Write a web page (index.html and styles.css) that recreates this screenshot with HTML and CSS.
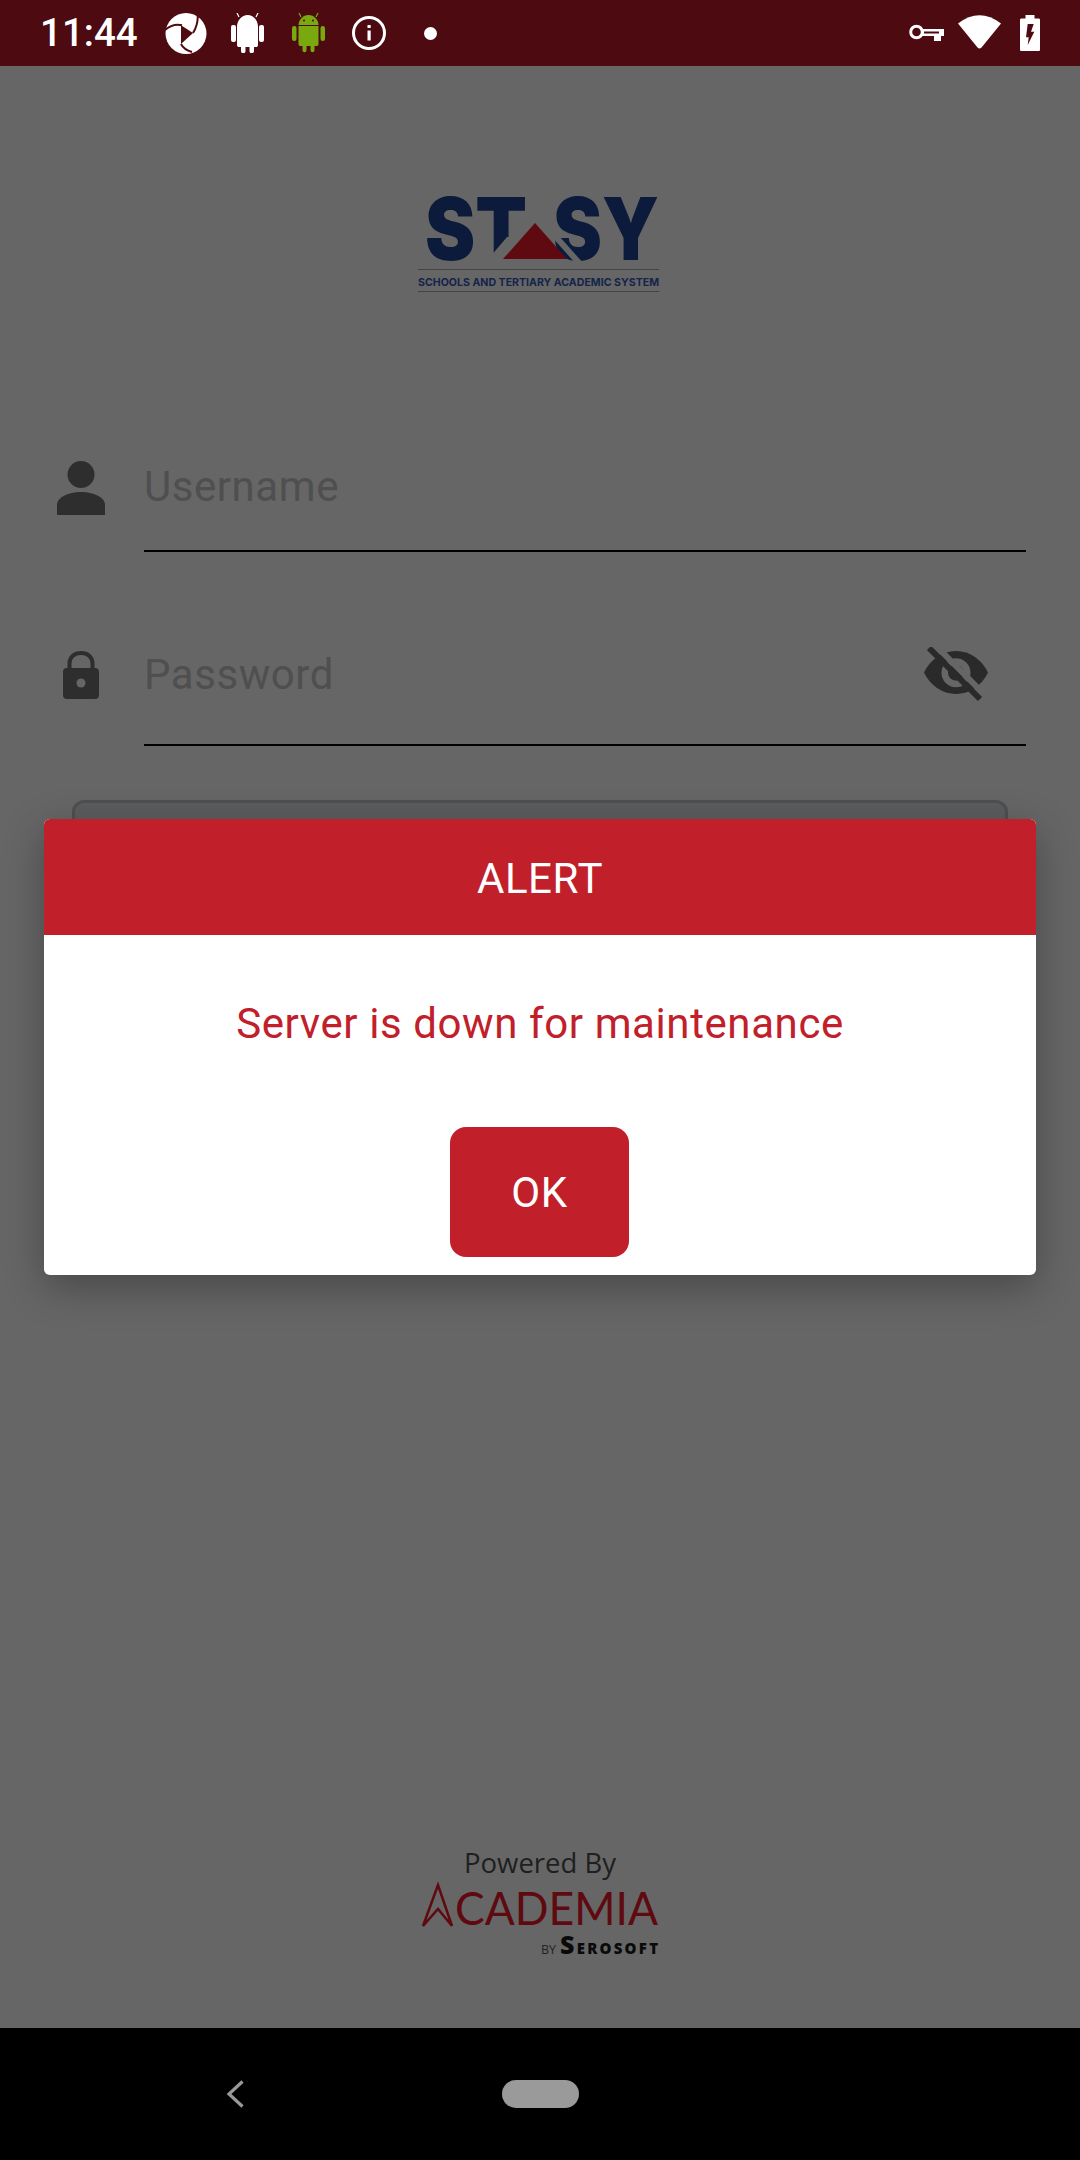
FILE: index.html
```html
<!DOCTYPE html>
<html lang="en">
<head>
  <meta charset="UTF-8">
  <meta name="viewport" content="width=device-width, initial-scale=1.0">
  <title>STASY Login</title>
  <link rel="stylesheet" href="styles.css">
</head>
<body>
  <div class="screen">
    <div class="status-bar">
      <span class="clock">11:44</span>
      <svg class="icon-swirl" viewBox="0 0 42 42">
        <circle cx="21" cy="21.5" r="20.500" fill="#fff"/>
        <path d="M16 13.300L28 21 16 32Z" fill="#4d0a10"/>
        <path d="M28 21C31 16 33 11 32.700 4M17 13.300C11 11.500 6 13 0 18M16 32C18 36 22 38.500 27 40" fill="none" stroke="#4d0a10" stroke-width="2"/>
      </svg>
      <svg class="icon-droid" viewBox="0 0 33 40">
        <path d="M8 4L6 0M25 4L27 0" stroke="#fff" stroke-width="1.2"/>
        <path d="M6 14C6 7 11 2 16.500 2S27 7 27 14V32C27 33.500 26 34 25 34H23V38C23 41 18.500 41 18.500 38V34H14.500V38C14.500 41 10 41 10 38V34H8C7 34 6 33.500 6 32Z" fill="#fff"/>
        <rect x="0" y="12" width="5" height="17" rx="2" fill="#fff"/>
        <rect x="28" y="12" width="5" height="17" rx="2" fill="#fff"/>
      </svg>
      <svg class="icon-droid-green" viewBox="0 0 33 40">
        <path d="M9 4L7 0M24 4L26 0" stroke="#7aa90f" stroke-width="1.2"/>
        <path d="M6.500 12C6.500 7 11 2 16.500 2S26.500 7 26.500 12Z" fill="#7aa90f"/>
        <circle cx="12" cy="7.500" r="1" fill="#4d0a10"/>
        <circle cx="21" cy="7.500" r="1" fill="#4d0a10"/>
        <path d="M6.500 13H26.500V31C26.500 32.500 25.500 33 24.500 33H22.500V37C22.500 40 18.500 40 18.500 37V33H14.500V37C14.500 40 10.500 40 10.500 37V33H8.500C7.500 33 6.500 32.500 6.500 31Z" fill="#7aa90f"/>
        <rect x="0" y="13" width="4.500" height="15" rx="2.200" fill="#7aa90f"/>
        <rect x="28.500" y="13" width="4.500" height="15" rx="2.200" fill="#7aa90f"/>
      </svg>
      <svg class="icon-info" viewBox="0 0 34 36">
        <circle cx="17" cy="18" r="15.500" fill="none" stroke="#fff" stroke-width="3"/>
        <rect x="15.500" y="15.500" width="3.200" height="10" fill="#fff"/>
        <rect x="15.500" y="10" width="3.200" height="3" fill="#fff"/>
      </svg>
      <span class="status-dot"></span>
      <svg class="icon-key" viewBox="0 0 35 19">
        <circle cx="7.500" cy="8" r="5.800" fill="none" stroke="#fff" stroke-width="3"/>
        <path d="M13 5H35V12H32V17H25V12H13Z" fill="#fff"/>
        <rect x="15" y="7.500" width="15" height="2" fill="#4d0a10"/>
      </svg>
      <svg class="icon-wifi" viewBox="0 0 43 34">
        <path d="M0 8.500Q21.500 -8 43 8.500L23.500 32.500Q21.500 34.500 19.500 32.500Z" fill="#fff"/>
      </svg>
      <svg class="icon-battery" viewBox="0 0 20 36">
        <path d="M5.500 0H14.500V3.500H18.500C19.500 3.500 20 4 20 5V34.500C20 35.500 19.500 36 18.500 36H1.500C.5 36 0 35.500 0 34.500V5C0 4 .5 3.500 1.500 3.500H5.500Z" fill="#fff"/>
        <path d="M13.700 9H7.700L6 22.300H8.700L7.700 30 14.300 16.700H11Z" fill="#4d0a10"/>
      </svg>
    </div>

    <div class="main">
      <svg class="logo" viewBox="400 166 280 134">
        <text class="logo-word" x="425" y="260" textLength="102" lengthAdjust="spacingAndGlyphs">ST</text>
        <text class="logo-word" x="553" y="260" textLength="106" lengthAdjust="spacingAndGlyphs">SY</text>
        <!-- gaps cut out of the T stem and the second S, along the triangle -->
        <path d="M507 237L490 257V264H530V237Z" fill="#666"/>
        <path d="M535 218L576 264H584L543 218Z" fill="#666"/>
        <path d="M535 223L567 259H503Z" fill="#5e0a10"/>
        <rect x="418" y="269" width="241" height="1" fill="#444"/>
        <text class="logo-sub" x="418" y="286" textLength="241" lengthAdjust="spacingAndGlyphs">SCHOOLS AND TERTIARY ACADEMIC SYSTEM</text>
        <rect x="418" y="291" width="241" height="1" fill="#444"/>
      </svg>

      <div class="field field-user">
        <div class="field-icon">
          <svg class="icon-person" viewBox="0 0 48 54">
            <circle cx="24" cy="13.500" r="13.500"/>
            <path d="M0 54V44C0 36 12 31 24 31S48 36 48 44V54Z"/>
          </svg>
        </div>
        <div class="field-box"><span class="placeholder">Username</span></div>
      </div>

      <div class="field field-pass">
        <div class="field-icon">
          <svg class="icon-lock" viewBox="0 0 36 48">
            <path d="M6.500 18V12.500C6.500 6 11.500 2 18 2S29.500 6 29.500 12.500V18" fill="none" stroke="#2e2e2e" stroke-width="4"/>
            <rect y="17" width="36" height="31" rx="4"/>
            <circle cx="18" cy="32" r="4.500" fill="#666"/>
          </svg>
        </div>
        <div class="field-box">
          <span class="placeholder">Password</span>
          <svg class="icon-eye" viewBox="0 0 66 56">
            <path d="M1 25.500C7 13 19 4 33 4S59 13 65 25.500C59 38 47 47 33 47S7 38 1 25.500Z"/>
            <circle cx="33" cy="25.700" r="14.500" fill="#666"/>
            <circle cx="33" cy="25.700" r="8"/>
            <path d="M11 -3L62 48" stroke="#666" stroke-width="6"/>
            <path d="M6 1L57 52" stroke="#2a2a2a" stroke-width="6"/>
          </svg>
        </div>
      </div>

      <div class="login-btn"></div>

      <div class="footer">
        <div class="powered">Powered By</div>
        <svg class="academia" viewBox="415 1880 250 80">
          <path d="M423 1926L438 1885 452 1926 438 1909Z" fill="none" stroke="#5e0a10" stroke-width="2.500"/>
          <text class="academia-word" x="455" y="1925" textLength="203" lengthAdjust="spacingAndGlyphs">CADEMIA</text>
          <text class="by" x="541" y="1954" textLength="15" lengthAdjust="spacingAndGlyphs">BY</text>
          <text class="sero" x="560" y="1954" textLength="98" lengthAdjust="spacing"><tspan class="sero-s">S</tspan>EROSOFT</text>
        </svg>
      </div>

      <div class="dialog">
        <div class="dialog-head">ALERT</div>
        <div class="dialog-body">
          <div class="dialog-msg">Server is down for maintenance</div>
          <button class="dialog-ok">OK</button>
        </div>
      </div>
    </div>

    <div class="nav-bar">
      <svg class="nav-back" viewBox="0 0 18 28">
        <path d="M16.500 1.500L3 14 16.500 26.500" fill="none" stroke="#999" stroke-width="3.200"/>
      </svg>
      <div class="nav-home"></div>
    </div>
  </div>
</body>
</html>
```

FILE: styles.css
```css
html, body {
  margin: 0;
  padding: 0;
}
body {
  font-family: Roboto, "Liberation Sans", sans-serif;
  background-color: #666;
}
.screen {
  width: 1080px;
  height: 2160px;
  display: flex;
  flex-direction: column;
  overflow: hidden;
}

/* status bar */
.status-bar {
  height: 66px;
  flex: none;
  background: #4d0a10;
  display: flex;
  align-items: center;
  padding: 0 40px;
  box-sizing: border-box;
}
.status-bar svg {
  display: block;
  flex: none;
}
.clock {
  color: white;
  font-size: 38.5px;
  font-weight: 500;
  width: 96px;
  line-height: 66px;
}
.icon-swirl { width: 42px; height: 42px; margin-left: 29px; }
.icon-droid { width: 33px; height: 40px; margin-left: 24px; }
.icon-droid-green { width: 33px; height: 40px; margin-left: 28px; }
.icon-info { width: 34px; height: 36px; margin-left: 27px; }
.status-dot {
  width: 13px;
  height: 13px;
  border-radius: 50%;
  background: white;
  margin-left: 38px;
}
.icon-key { width: 35px; height: 19px; margin-left: auto; }
.icon-wifi { width: 43px; height: 34px; margin-left: 14px; margin-top: -2px; }
.icon-battery { width: 20px; height: 36px; margin-left: 19px; }

/* login form */
.main {
  flex: 1;
  position: relative;
  display: flex;
  flex-direction: column;
  background: #666;
}
.logo {
  display: block;
  width: 280px;
  height: 134px;
  margin: 100px 0 0 400px;
}
.logo-word {
  font-family: Inter, "Liberation Sans", sans-serif;
  font-size: 86px;
  font-weight: 900;
  fill: #0c1b3c;
}
.logo-sub {
  font-family: Inter, "Liberation Sans", sans-serif;
  font-size: 11px;
  font-weight: 700;
  fill: #15244a;
}
.field {
  display: flex;
  padding-left: 57px;
  padding-right: 54px;
}
.field-icon {
  width: 87px;
  flex: none;
}
.field-icon svg {
  display: block;
  fill: #2e2e2e;
}
.field-box {
  flex: 1;
  position: relative;
  box-sizing: border-box;
  border-bottom: 2px solid black;
}
.placeholder {
  display: block;
  color: #4f4f4f;
  font-size: 42px;
  line-height: 50px;
  letter-spacing: 0.55px;
}
.field-user {
  margin-top: 162px;
}
.field-user .field-box {
  height: 90px;
}
.icon-person {
  width: 48px;
  height: 54px;
  margin-top: -1px;
}
.field-pass {
  margin-top: 96px;
}
.field-pass .field-box {
  height: 98px;
  padding-top: 2px;
}
.icon-lock {
  width: 36px;
  height: 48px;
  margin: 3px 0 0 6px;
}
.icon-eye {
  position: absolute;
  right: 37px;
  top: -1px;
  width: 66px;
  height: 56px;
  fill: #2a2a2a;
}
.login-btn {
  height: 120px;
  margin: 54px 72px 0 72px;
  box-sizing: border-box;
  background: #5b5d5e;
  border: 3px solid #505050;
  border-radius: 12px;
}

/* footer logos */
.footer {
  margin-top: auto;
  padding-bottom: 68px;
  display: flex;
  flex-direction: column;
  align-items: center;
}
.powered {
  font-family: "Open Sans", "Liberation Sans", sans-serif;
  font-size: 27.5px;
  line-height: 34px;
  color: #1f1f1f;
}
.academia {
  display: block;
  width: 250px;
  height: 80px;
}
.academia-word {
  font-family: Lato, "Liberation Sans", sans-serif;
  font-size: 46px;
  fill: #5e0a10;
}
.by {
  font-family: "Open Sans", "Liberation Sans", sans-serif;
  font-size: 12px;
  fill: #222;
}
.sero {
  font-family: "Open Sans", "Liberation Sans", sans-serif;
  font-size: 15px;
  font-weight: 800;
  fill: #0a0a0a;
}
.sero-s {
  font-size: 25px;
}

/* alert dialog */
.dialog {
  position: absolute;
  left: 44px;
  top: 753px;
  width: 992px;
  height: 456px;
  background: white;
  border-radius: 6px;
  box-shadow: 0 12px 40px rgba(0, 0, 0, 0.3);
  overflow: hidden;
}
.dialog-head {
  height: 116px;
  padding-top: 2px;
  box-sizing: border-box;
  background: #c1202b;
  color: white;
  font-size: 42px;
  letter-spacing: 0.6px;
  display: flex;
  align-items: center;
  justify-content: center;
}
.dialog-body {
  display: flex;
  flex-direction: column;
  align-items: center;
  padding-top: 64px;
}
.dialog-msg {
  color: #c1202b;
  font-size: 42px;
  line-height: 50px;
  letter-spacing: 0.6px;
}
.dialog-ok {
  width: 179px;
  height: 130px;
  margin: 78px 1px 0 0;
  background: #c1202b;
  color: white;
  border: none;
  border-radius: 16px;
  font-family: Roboto, "Liberation Sans", sans-serif;
  font-size: 42px;
  letter-spacing: 0.6px;
  padding: 0;
}

/* navigation bar */
.nav-bar {
  height: 132px;
  flex: none;
  background: black;
  display: flex;
  align-items: center;
  padding-left: 226px;
}
.nav-back {
  display: block;
  width: 18px;
  height: 28px;
}
.nav-home {
  width: 77px;
  height: 28px;
  border-radius: 14px;
  background: #9a9a9a;
  margin-left: 258px;
}
```
